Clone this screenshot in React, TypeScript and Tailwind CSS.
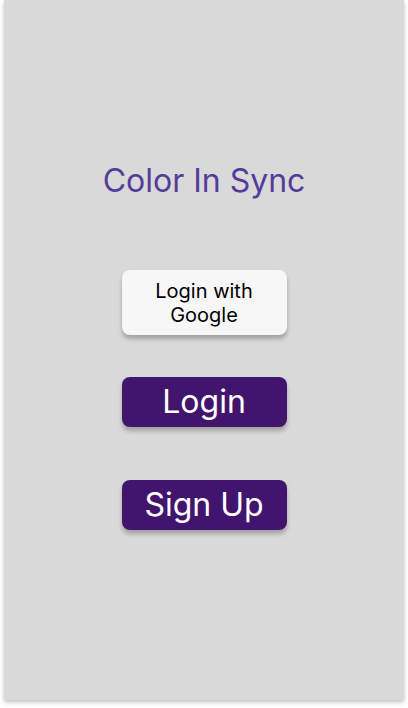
import React from 'react';

export default function App() {
  return (
    <div className="min-h-screen bg-white" style={{ fontFamily: 'Inter, "Noto Sans", sans-serif' }}>
      <div className="ml-1 w-[400px] h-[700px] bg-[#d9d9d9] shadow-[0_2px_4px_rgba(0,0,0,0.25)] flex flex-col items-center">
        <h1 className="mt-[162px] text-[32px] leading-[38px] text-[#553c9a]">Color In Sync</h1>
        <button className="mt-[70px] w-[165px] h-[65px] rounded-lg bg-[#f7f7f7] text-black text-[20px] leading-[24px] shadow-[0_4px_4px_rgba(0,0,0,0.25)]">
          Login with
          <br />
          Google
        </button>
        <button className="mt-[42px] w-[165px] h-[50px] rounded-lg bg-[#41156e] text-white text-[32px] leading-[38px] shadow-[0_4px_4px_rgba(0,0,0,0.25)]">
          Login
        </button>
        <button className="mt-[53px] w-[165px] h-[50px] rounded-lg bg-[#41156e] text-white text-[32px] leading-[38px] shadow-[0_4px_4px_rgba(0,0,0,0.25)]">
          Sign Up
        </button>
      </div>
    </div>
  );
}
